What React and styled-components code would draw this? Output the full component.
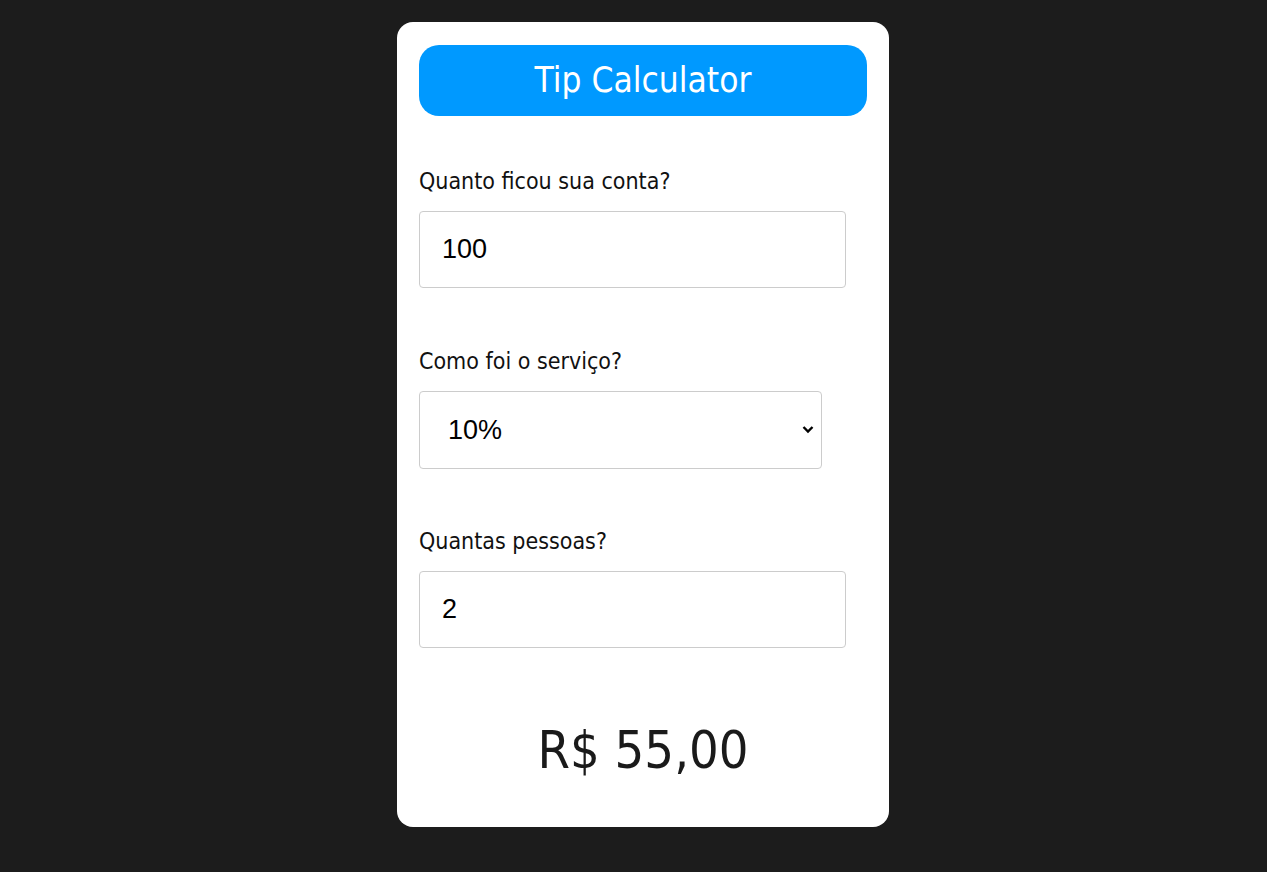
import React, { useState } from "react"
import styled, { createGlobalStyle } from "styled-components"

const GlobalStyle = createGlobalStyle`
    html, body {
        margin: 0;
        padding: 0;
        background: #1c1c1c;
    }
`

const Page = styled.div`
    display: flex;
    justify-content: center;
    min-height: 872px;
    padding: 22px 0 0 19px;
    box-sizing: border-box;
`

const Card = styled.main`
    background: #ffffff;
    border-radius: 16px;
    box-sizing: border-box;
    display: flex;
    flex-direction: column;
    height: 805px;
    padding: 23px 22px;
    width: 492px;
    font-family: "Ubuntu Condensed", "Liberation Sans Narrow", "DejaVu Sans Condensed", sans-serif;
    font-stretch: condensed;
`

const Title = styled.h1`
    background: #0099ff;
    border-radius: 20px;
    color: #ffffff;
    font-size: 35px;
    font-weight: 400;
    height: 71px;
    line-height: 71px;
    margin: 0;
    text-align: center;
`

const Field = styled.label`
    display: flex;
    flex-direction: column;
    gap: 15px;
    margin-top: ${(props) => props.top}px;
`

const Caption = styled.span`
    color: #111111;
    font-size: 23px;
    line-height: 30px;
`

const TextInput = styled.input`
    border: 1px solid #cccccc;
    border-radius: 4px;
    box-sizing: border-box;
    color: #000000;
    font-family: "Liberation Sans", Arial, sans-serif;
    font-size: 27px;
    height: 77px;
    outline: none;
    padding: 0 22px;
    width: 427px;
`

const SelectWrap = styled.div`
    position: relative;
    width: 403px;
`

const Select = styled.select`
    appearance: none;
    background: #ffffff;
    border: 1px solid #cccccc;
    border-radius: 4px;
    box-sizing: border-box;
    color: #000000;
    font-family: "Liberation Sans", Arial, sans-serif;
    font-size: 27px;
    height: 78px;
    outline: none;
    padding: 0 40px 0 28px;
    width: 100%;
`

const Chevron = styled.svg`
    pointer-events: none;
    position: absolute;
    right: 8px;
    top: 34px;
`

const Total = styled.div`
    color: #1a1a1a;
    font-size: 52px;
    line-height: 60px;
    margin-top: 72px;
    text-align: center;
`

const App = () => {
    const [bill, setBill] = useState("100")
    const [tip, setTip] = useState("0.1")
    const [people, setPeople] = useState("2")

    const total = ((Number(bill) || 0) * (1 + Number(tip))) / (Number(people) || 1)

    return (
        <React.Fragment>
            <GlobalStyle />
            <Page>
                <Card>
                    <Title>Tip Calculator</Title>
                    <Field top={50}>
                        <Caption>Quanto ficou sua conta?</Caption>
                        <TextInput type="text" value={bill} onChange={(e) => setBill(e.target.value)} />
                    </Field>
                    <Field top={58}>
                        <Caption>Como foi o serviço?</Caption>
                        <SelectWrap>
                            <Select value={tip} onChange={(e) => setTip(e.target.value)}>
                                <option value="0.05">5%</option>
                                <option value="0.1">10%</option>
                                <option value="0.15">15%</option>
                                <option value="0.2">20%</option>
                            </Select>
                            <Chevron width="12" height="9" viewBox="0 0 12 9">
                                <path d="M1.5 2 L6 6.5 L10.5 2" fill="none" stroke="#000" strokeWidth="2.4" />
                            </Chevron>
                        </SelectWrap>
                    </Field>
                    <Field top={57}>
                        <Caption>Quantas pessoas?</Caption>
                        <TextInput type="text" value={people} onChange={(e) => setPeople(e.target.value)} />
                    </Field>
                    <Total>R$ {total.toFixed(2).replace(".", ",")}</Total>
                </Card>
            </Page>
        </React.Fragment>
    )
}

export default App
